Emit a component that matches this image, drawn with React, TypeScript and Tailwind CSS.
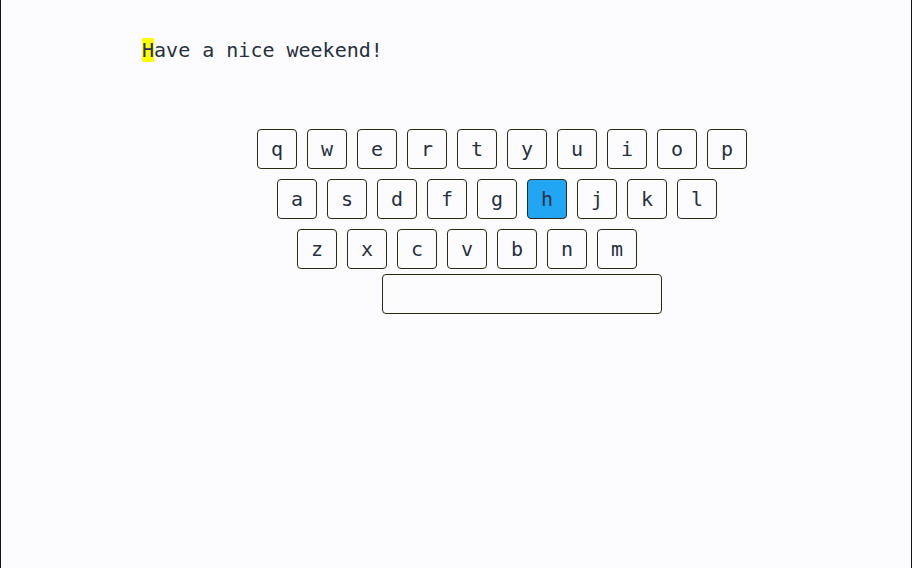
const rows = ['qwertyuiop', 'asdfghjkl', 'zxcvbnm'];
const active = 'h';
const indents = ['pl-0', 'pl-5', 'pl-10'];

const Key = ({ ch }: { ch: string }) => (
  <div
    className={`w-10 h-10 flex items-center justify-center rounded-[4px] border border-[#2b2b14] text-[20px] leading-none text-[#263040] ${
      ch === active ? 'bg-[#21a6f3]' : 'bg-[#fcfcfe]'
    }`}
  >
    {ch}
  </div>
);

export default function App() {
  return (
    <div
      className="w-[912px] h-[568px] bg-[#fcfcfe] border-l border-r border-[#111] overflow-hidden"
      style={{ fontFamily: '"DejaVu Sans Mono", "Liberation Mono", monospace' }}
    >
      {/* 入力する文 */}
      <div className="pt-[39px] pl-[141px] text-[20px] leading-[23px] text-[#263040]">
        <span className="bg-[#ffff00]">H</span>ave a nice weekend!
      </div>

      {/* キーボード */}
      <div className="mt-[67px] ml-[256px] flex flex-col">
        {rows.map((row, i) => (
          <div key={row} className={`flex gap-[10px] mb-[10px] ${indents[i]}`}>
            {row.split('').map((ch) => (
              <Key key={ch} ch={ch} />
            ))}
          </div>
        ))}
        <div className="-mt-[5px] ml-[125px] w-[280px] h-10 rounded-[4px] border border-[#2b2b14] bg-[#fcfcfe]" />
      </div>
    </div>
  );
}
